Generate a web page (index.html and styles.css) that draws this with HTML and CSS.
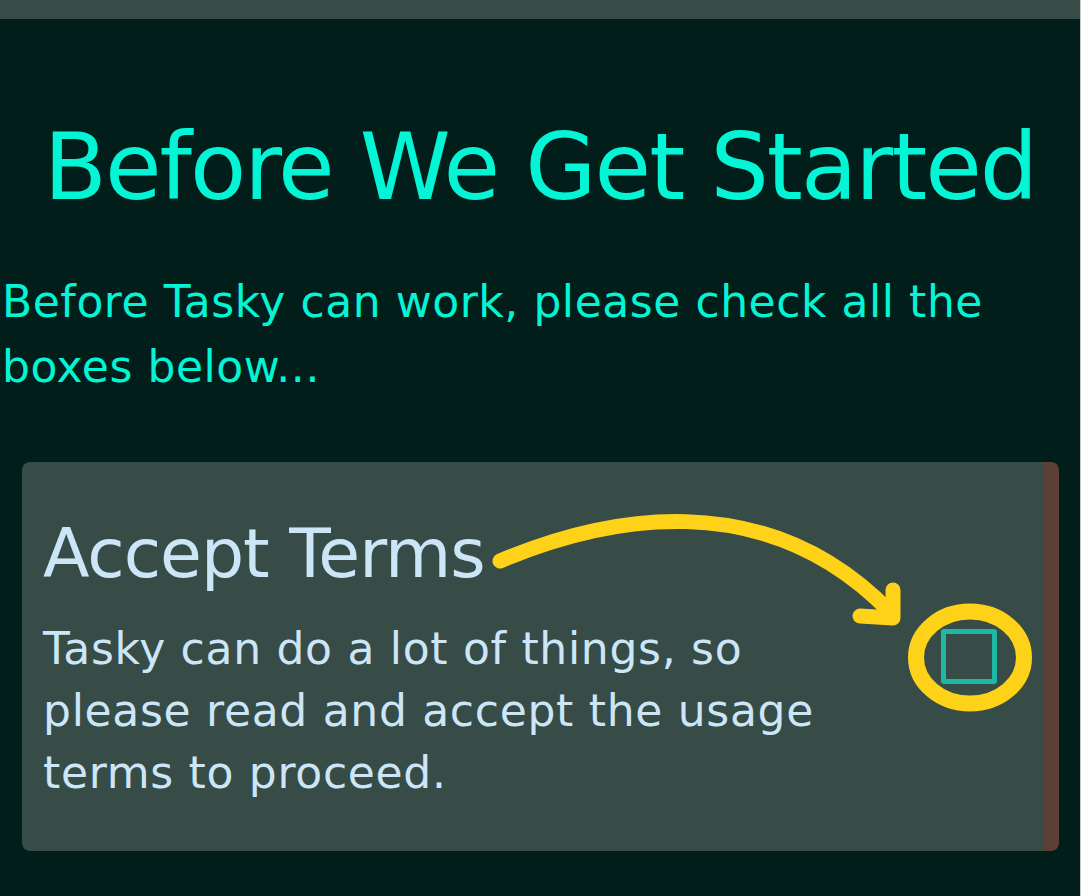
FILE: index.html
```html
<!DOCTYPE html>
<html>
<head>
    <title>Tasky - Before We Get Started</title>
    <link rel="stylesheet" href="styles.css">
</head>
<body>
    <div class="screen">
        <div class="topbar"></div>

        <h1>Before We Get Started</h1>

        <p class="intro">Before Tasky can work, please check all the boxes below...</p>

        <div class="card">
            <h2>Accept Terms</h2>
            <div class="card-row">
                <p class="card-text">Tasky can do a lot of things, so please read and accept the usage terms to proceed.</p>
                <span class="checkbox"></span>
            </div>

            <!-- hand drawn hint over the card -->
            <svg class="hint" viewBox="0 0 1037 390" width="1037" height="390" fill="none" stroke="#ffd21a" stroke-linecap="round" stroke-linejoin="round">
                <path d="M478 99 C580 56, 742 20, 868 150" stroke-width="15"></path>
                <path d="M871 128 L871 156 L838 154" stroke-width="15"></path>
                <ellipse cx="948" cy="195.5" rx="54" ry="46" stroke-width="16"></ellipse>
            </svg>
        </div>
    </div>
</body>
</html>
```

FILE: styles.css
```css
:root {
    --background: #011e1a;
    --panel: #374c47;
    --accent: #03f5d5;
    --ink: #cde6f7;
    --check: #1db9a4;
    --stripe: #5d3f38;
    --radius: 8px;
}

* {
    margin: 0;
    padding: 0;
    box-sizing: border-box;
}

html {
    background: #fff;
}

body {
    font-family: 'DejaVu Sans', 'Open Sans', sans-serif;
    font-weight: 400;
}

.screen {
    width: 1081px;
    min-height: 896px;
    background: var(--background);
    border-right: 1px solid #c3cac8;
    overflow: hidden;
}

.topbar {
    height: 19px;
    background: var(--panel);
}

h1 {
    margin-top: 94px;
    text-align: center;
    font-size: 92px;
    line-height: 110px;
    font-weight: 400;
    letter-spacing: -2px;
    color: var(--accent);
}

.intro {
    margin-top: 46px;
    padding-left: 2px;
    font-size: 44px;
    line-height: 65px;
    letter-spacing: 0.55px;
    color: var(--accent);
}

.card {
    position: relative;
    margin: 63px 21px 0 22px;
    padding: 52px 0 47px 21px;
    background: var(--panel);
    border-right: 15px solid var(--stripe);
    border-radius: var(--radius);
}

.card h2 {
    font-size: 68px;
    line-height: 80px;
    font-weight: 400;
    letter-spacing: -1px;
    color: var(--ink);
}

.card-row {
    display: flex;
    align-items: flex-start;
    margin-top: 24px;
}

.card-text {
    flex: 1;
    font-size: 44px;
    line-height: 62px;
    letter-spacing: 0.7px;
    color: var(--ink);
}

.checkbox {
    width: 56px;
    height: 55px;
    margin: 11px 47px 0 90px;
    border: 5px solid var(--check);
    border-radius: 3px;
}

.hint {
    position: absolute;
    top: 0;
    left: 0;
    pointer-events: none;
}
```
